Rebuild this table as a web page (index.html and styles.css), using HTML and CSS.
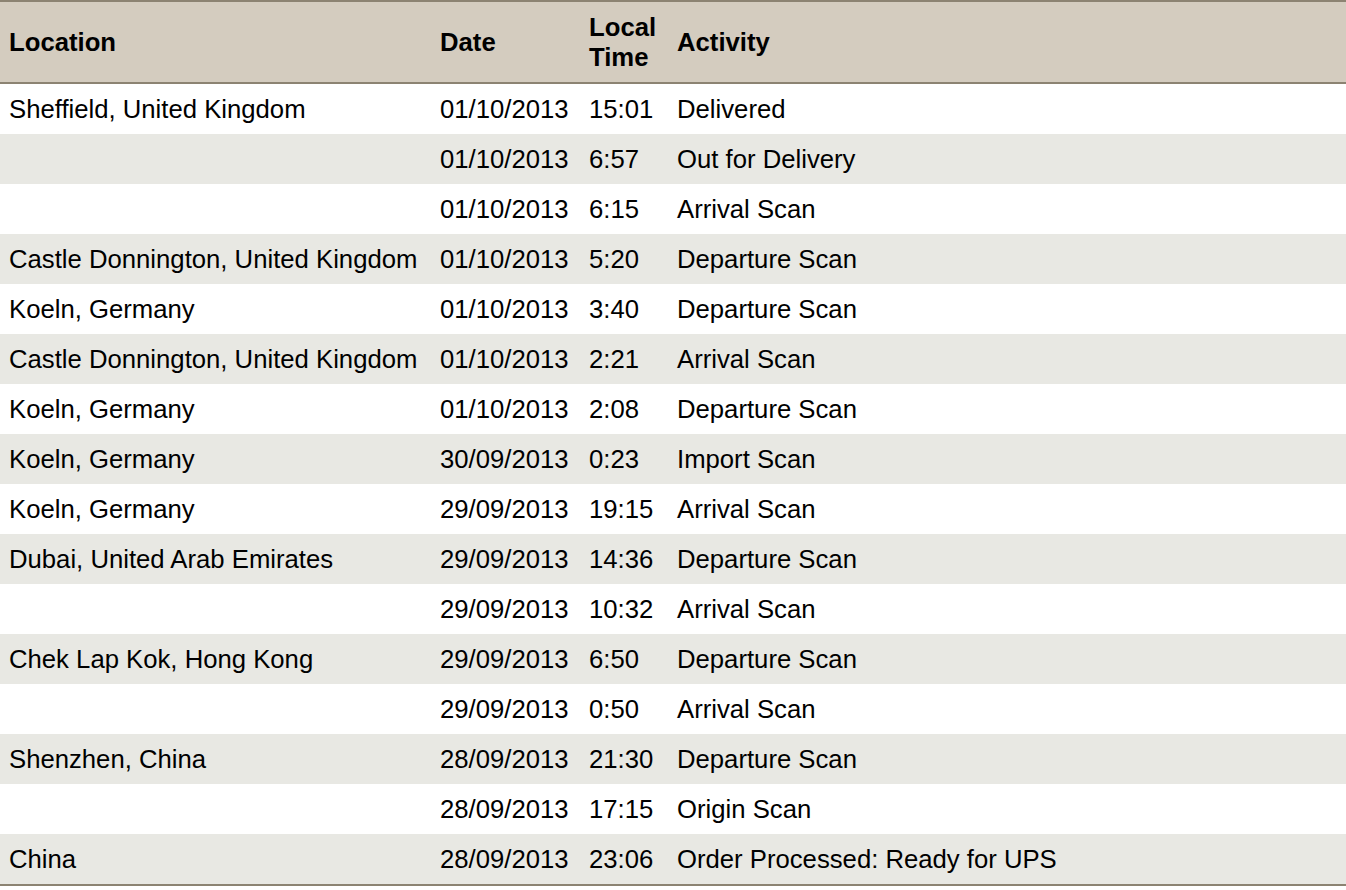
FILE: index.html
```html
<!DOCTYPE html>
<html lang="en">
<head>
<meta charset="utf-8">
<title>Shipment Progress</title>
<link rel="stylesheet" href="styles.css">
</head>
<body>
<table class="progress">
  <colgroup>
    <col class="col-location">
    <col class="col-date">
    <col class="col-time">
    <col class="col-activity">
  </colgroup>
  <thead>
    <tr>
      <th>Location</th>
      <th>Date</th>
      <th>Local<br>Time</th>
      <th>Activity</th>
    </tr>
  </thead>
  <tbody>
    <tr><td>Sheffield, United Kingdom</td><td>01/10/2013</td><td>15:01</td><td>Delivered</td></tr>
    <tr><td></td><td>01/10/2013</td><td>6:57</td><td>Out for Delivery</td></tr>
    <tr><td></td><td>01/10/2013</td><td>6:15</td><td>Arrival Scan</td></tr>
    <tr><td>Castle Donnington, United Kingdom</td><td>01/10/2013</td><td>5:20</td><td>Departure Scan</td></tr>
    <tr><td>Koeln, Germany</td><td>01/10/2013</td><td>3:40</td><td>Departure Scan</td></tr>
    <tr><td>Castle Donnington, United Kingdom</td><td>01/10/2013</td><td>2:21</td><td>Arrival Scan</td></tr>
    <tr><td>Koeln, Germany</td><td>01/10/2013</td><td>2:08</td><td>Departure Scan</td></tr>
    <tr><td>Koeln, Germany</td><td>30/09/2013</td><td>0:23</td><td>Import Scan</td></tr>
    <tr><td>Koeln, Germany</td><td>29/09/2013</td><td>19:15</td><td>Arrival Scan</td></tr>
    <tr><td>Dubai, United Arab Emirates</td><td>29/09/2013</td><td>14:36</td><td>Departure Scan</td></tr>
    <tr><td></td><td>29/09/2013</td><td>10:32</td><td>Arrival Scan</td></tr>
    <tr><td>Chek Lap Kok, Hong Kong</td><td>29/09/2013</td><td>6:50</td><td>Departure Scan</td></tr>
    <tr><td></td><td>29/09/2013</td><td>0:50</td><td>Arrival Scan</td></tr>
    <tr><td>Shenzhen, China</td><td>28/09/2013</td><td>21:30</td><td>Departure Scan</td></tr>
    <tr><td></td><td>28/09/2013</td><td>17:15</td><td>Origin Scan</td></tr>
    <tr><td>China</td><td>28/09/2013</td><td>23:06</td><td>Order Processed: Ready for UPS</td></tr>
  </tbody>
</table>
</body>
</html>
```

FILE: styles.css
```css
html, body {
  margin: 0;
  padding: 0;
  background: #ffffff;
}

body {
  font-family: "Liberation Sans", Arial, Helvetica, sans-serif;
  font-size: 25.7px;
  color: #000000;
}

.progress {
  width: 100%;
  border-collapse: collapse;
  table-layout: fixed;
  border-top: 2px solid #8c8372;
  border-bottom: 2px solid #8c8372;
}

.col-location { width: 431px; }
.col-date { width: 149px; }
.col-time { width: 88px; }

.progress th,
.progress td {
  padding: 10px 9px;
  line-height: 30px;
  text-align: left;
  vertical-align: middle;
  white-space: nowrap;
}

.progress thead tr {
  background: #d4ccbf;
}

.progress th {
  font-weight: bold;
  border-bottom: 2px solid #8c8372;
}

.progress tbody tr {
  height: 50px;
  background: #ffffff;
}

.progress tbody tr:nth-child(even) {
  background: #e8e8e3;
}
```
